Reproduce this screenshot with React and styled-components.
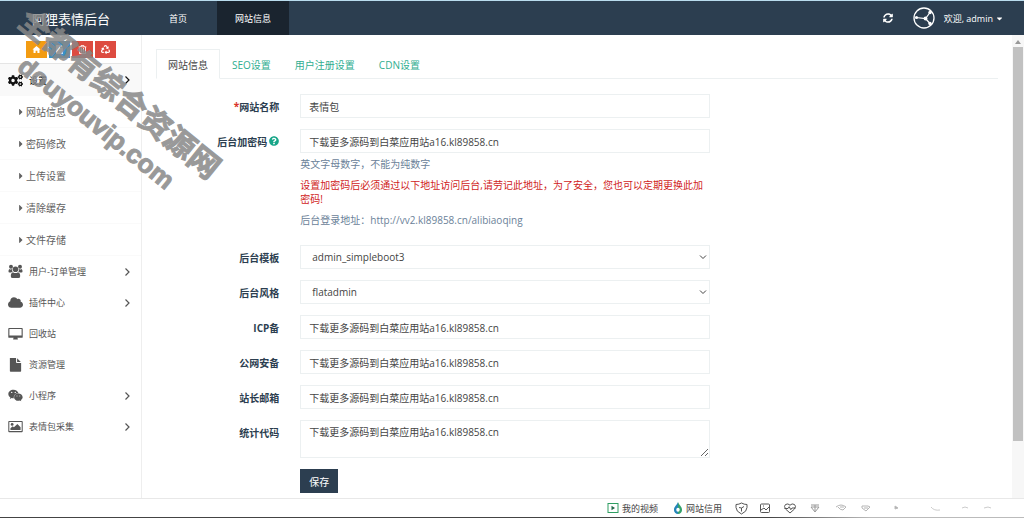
import React, { useState } from "react";
import styled, { createGlobalStyle } from "styled-components";
import {
  FaSyncAlt,
  FaCaretDown,
  FaCaretRight,
  FaCogs,
  FaCloud,
  FaFile,
  FaWeixin,
  FaQuestionCircle,
  FaRecycle,
  FaRegTrashAlt,
} from "react-icons/fa";

function UsersIcon(props) {
  return (
    <svg viewBox="0 0 16 16" fill="currentColor" aria-hidden="true" {...props}>
      <circle cx="3.2" cy="3" r="2.1" />
      <circle cx="12.8" cy="3" r="2.1" />
      <circle cx="8" cy="5.600" r="3" />
      <path d="M1.500 5.200Q3.200 6.300 4.300 5.300 4.100 7 5 8.200 4 8.300 3.400 9H1.600Q.5 9 .5 7.700.5 6 1.500 5.200zM14.500 5.200Q12.800 6.300 11.700 5.300 11.900 7 11 8.200 12 8.300 12.600 9h1.800Q15.500 9 15.500 7.700 15.500 6 14.500 5.200z" />
      <path d="M5.300 8.800Q8 10.600 10.700 8.800 13 9.200 13 13q0 2-2 2H5q-2 0-2-2 0-3.800 2.300-4.200z" />
    </svg>
  );
}

function DesktopIcon(props) {
  return (
    <svg viewBox="0 0 16 16" fill="currentColor" aria-hidden="true" {...props}>
      <path
        fillRule="evenodd"
        d="M1.200 2h13.600q.9 0 .9.900v8.800q0 .9-.9.900H10l.5 1.200v.7h-5v-.7l.5-1.200H1.200q-.9 0-.9-.9V2.900q0-.9.900-.9zM1.500 3.200v7h13v-7z"
      />
    </svg>
  );
}

function FileIcon(props) {
  return (
    <svg viewBox="0 0 16 16" fill="currentColor" aria-hidden="true" {...props}>
      <path d="M2 1h6.600v4.600q0 .8.800.8H14V15q0 .8-.8.800H2.800Q2 15.800 2 15zM9.700 1.200l4 4h-4z" />
    </svg>
  );
}

function ImageIcon(props) {
  return (
    <svg viewBox="0 0 16 16" fill="currentColor" aria-hidden="true" {...props}>
      <path
        fillRule="evenodd"
        d="M1.200 2h13.600q.9 0 .9.900v10.200q0 .9-.9.900H1.200q-.9 0-.9-.9V2.900q0-.9.900-.9zM1.400 3.100v9.800h13.200V3.100z"
      />
      <circle cx="4.400" cy="5.800" r="1.500" />
      <path d="M2.600 11.800V9.900L5 7.600l1.300 1.300L10 5.200l3.400 3.500v3.100z" />
    </svg>
  );
}

function ArrowIcon(props) {
  return (
    <svg viewBox="0 0 10 12" fill="none" stroke="currentColor" aria-hidden="true" {...props}>
      <path d="M3.500 2.500 7 6 3.500 9.500" strokeWidth="1.200" />
    </svg>
  );
}

function HomeIcon(props) {
  return (
    <svg width="9" height="9" viewBox="0 0 10 10" fill="currentColor" aria-hidden="true" {...props}>
      <path d="M5 1 9.500 5H8.300v4H6V6.500H4V9H1.700V5H.5z" />
    </svg>
  );
}

const subMenu = ["网站信息", "密码修改", "上传设置", "清除缓存", "文件存储"];

const mainMenu = [
  { label: "用户-订单管理", icon: UsersIcon, more: true },
  { label: "插件中心", icon: FaCloud, more: true },
  { label: "回收站", icon: DesktopIcon },
  { label: "资源管理", icon: FileIcon },
  { label: "小程序", icon: FaWeixin, more: true },
  { label: "表情包采集", icon: ImageIcon, more: true },
];

const tools = [
  { label: "首页", color: "#f39c12", icon: HomeIcon },
  { label: "文章", color: "#3a8fc9", icon: FaFile },
  { label: "删除", color: "#dd4b40", icon: FaRegTrashAlt },
  { label: "清除缓存", color: "#dd4b40", icon: FaRecycle },
];

const tabs = ["网站信息", "SEO设置", "用户注册设置", "CDN设置"];

const code = "下载更多源码到白菜应用站a16.kl89858.cn";

const extraFields = [
  { id: "icp", label: "ICP备" },
  { id: "police", label: "公网安备" },
  { id: "email", label: "站长邮箱" },
];

function Avatar() {
  return (
    <svg width="22" height="22" viewBox="0 0 22 22" fill="none" stroke="#fff" aria-hidden="true">
      <circle cx="11" cy="11" r="10" strokeWidth="1.300" />
      <path d="M3 10.500 12.500 11.500 17 5.500M12.500 11.500l4.500 5" strokeWidth="1.200" />
      <g fill="#fff" stroke="none">
        <circle cx="3.500" cy="10.500" r="1.600" />
        <circle cx="12.500" cy="11.500" r="1.900" />
        <circle cx="17" cy="5.500" r="1.700" />
        <circle cx="17" cy="16.500" r="1.700" />
      </g>
    </svg>
  );
}

function StatusBar() {
  return (
    <Status>
      <StatusItem>
        <svg width="12" height="12" viewBox="0 0 12 12" aria-hidden="true">
          <rect x="1" y="1.500" width="10" height="9" fill="none" stroke="#2f9e62" />
          <path d="M4.500 3.800v4.400L8 6z" fill="#24684a" />
        </svg>
        我的视频
      </StatusItem>
      <StatusItem>
        <svg width="10" height="12" viewBox="0 0 10 12" aria-hidden="true">
          <path d="M5 0C6 3 9 4.600 9 7.700A4 4 0 0 1 5 12Z" fill="#34a26b" />
          <path d="M5 0C4 3 1 4.600 1 7.700A4 4 0 0 0 5 12Z" fill="#2585b9" />
          <ellipse cx="5" cy="7.800" rx="1.700" ry="2" fill="#fff" />
        </svg>
        网站信用
      </StatusItem>
      <StatusIcons viewBox="0 0 280 14" aria-hidden="true">
        <g stroke="#555">
          <path d="M2 3.500Q5 3.500 7.500 2q2.500 1.500 5.500 1.500v3q0 4-5.500 6.500Q2 10.500 2 6.500zM5 6.500 7.500 7 10 5.500M7.500 7v3.500" />
          <rect x="26.500" y="3" width="9" height="8.500" rx="1" />
          <path d="M27 9l3-2 2 2 3-3M29 5h1" />
          <path d="M56 12 51.500 8q-2-3 0-4.500Q54 2 56 4.200 58 2 60.500 3.500q2 1.500 0 4.500zM50.500 7.500H54l1.200-1.800 1.600 3L58 7h3.500" />
        </g>
        <g stroke="#999">
          <path d="M77 4h8M77 6h8l-4 5-4-5M81 4v6" />
          <path d="M102 6q5-4 10 0l-3 3q-3 0-5-3M106 6h4" stroke="#b5b5b5" />
          <path d="M128 5h6l2 1-4 4-4-3zM130 7h4" stroke="#b5b5b5" />
        </g>
        <path d="M161 5l3 2-3 1z" fill="#aaa" stroke="#bbb" />
        <path d="M197 6q3 4 9 3" stroke="#ccc" />
        <path d="M228 7q3-2 6 0M250 7l4-1 3 1" stroke="#ccc" />
      </StatusIcons>
    </Status>
  );
}

function SelectField({ id, value }) {
  return (
    <SelectWrap>
      <Select id={id}>
        <option>{value}</option>
      </Select>
      <svg viewBox="0 0 8 8" fill="none" stroke="#444" aria-hidden="true">
        <path d="M1 2.500 4 5.500 7 2.500" />
      </svg>
    </SelectWrap>
  );
}

export default function App() {
  const [activeTab, setActiveTab] = useState(tabs[0]);

  return (
    <>
      <GlobalStyle />
      <Page>
        <Header>
          <Brand href="#">阿狸表情后台</Brand>
          <Nav>
            <NavLink href="#">首页</NavLink>
            <NavLink href="#" $active>
              网站信息
            </NavLink>
          </Nav>
          <UserArea>
            <RefreshButton aria-label="刷新">
              <FaSyncAlt />
            </RefreshButton>
            <UserButton>
              <Avatar />
              欢迎, admin
              <FaCaretDown />
            </UserButton>
          </UserArea>
        </Header>

        <Body>
          <Sidebar>
            <Tools>
              {tools.map(({ label, color, icon: Icon }) => (
                <ToolButton key={label} $color={color} aria-label={label}>
                  <Icon />
                </ToolButton>
              ))}
            </Tools>
            <MenuLink href="#" $open>
              <FaCogs className="icon" />
              <span>设置</span>
              <ArrowIcon className="arrow" />
            </MenuLink>
            {subMenu.map((label) => (
              <SubLink href="#" key={label}>
                <FaCaretRight />
                {label}
              </SubLink>
            ))}
            {mainMenu.map(({ label, icon: Icon, more }) => (
              <MenuLink href="#" key={label}>
                <Icon className="icon" />
                <span>{label}</span>
                {more && <ArrowIcon className="arrow" />}
              </MenuLink>
            ))}
            <Watermark aria-hidden="true">
              <p>全都有综合资源网</p>
              <p className="site">douyouvip.com</p>
            </Watermark>
          </Sidebar>

          <Main>
            <Tabs>
              {tabs.map((tab) => (
                <Tab key={tab} $active={tab === activeTab} onClick={() => setActiveTab(tab)}>
                  {tab}
                </Tab>
              ))}
            </Tabs>
            <Form onSubmit={(e) => e.preventDefault()}>
              <Row>
                <Label htmlFor="name">
                  <Required>*</Required>网站名称
                </Label>
                <Input id="name" defaultValue="表情包" />
              </Row>
              <Row>
                <Label htmlFor="password">
                  后台加密码 <FaQuestionCircle />
                </Label>
                <div>
                  <Input id="password" defaultValue={code} />
                  <Help>英文字母数字，不能为纯数字</Help>
                  <Help $warn>
                    设置加密码后必须通过以下地址访问后台,请劳记此地址，为了安全，您也可以定期更换此加密码!
                  </Help>
                  <Help>后台登录地址：http://vv2.kl89858.cn/alibiaoqing</Help>
                </div>
              </Row>
              <Row>
                <Label htmlFor="template">后台模板</Label>
                <SelectField id="template" value="admin_simpleboot3" />
              </Row>
              <Row>
                <Label htmlFor="theme">后台风格</Label>
                <SelectField id="theme" value="flatadmin" />
              </Row>
              {extraFields.map(({ id, label }) => (
                <Row key={id}>
                  <Label htmlFor={id}>{label}</Label>
                  <Input id={id} defaultValue={code} />
                </Row>
              ))}
              <Row>
                <Label htmlFor="stats">统计代码</Label>
                <TextArea id="stats" defaultValue={code} />
              </Row>
              <Row>
                <span />
                <SaveButton type="submit">保存</SaveButton>
              </Row>
            </Form>
          </Main>
          <Scrollbar aria-hidden="true">
            <span />
            <div />
          </Scrollbar>
        </Body>
        <StatusBar />
        <BottomEdge />
      </Page>
    </>
  );
}

const GlobalStyle = createGlobalStyle`
  * {
    box-sizing: border-box;
  }
  body {
    margin: 0;
    overflow: hidden;
  }
  body, button, input, select, textarea {
    font-family: "Open Sans", "Noto Sans CJK SC", sans-serif;
    font-size: 10px;
  }
  a {
    text-decoration: none;
  }
  p {
    margin: 0;
  }
  button {
    border: 0;
    padding: 0;
    cursor: pointer;
  }
`;

const Page = styled.div`
  display: flex;
  flex-direction: column;
  height: 100vh;
  border-top: 1px solid #b9dcee;
  background: #fff;
  color: #2c3e50;
`;

const Header = styled.header`
  display: flex;
  flex: 0 0 34px;
  background: #2c3e50;
`;

const Brand = styled.a`
  display: flex;
  align-items: center;
  justify-content: center;
  width: 142px;
  color: #fff;
  font-size: 13px;
`;

const Nav = styled.nav`
  display: flex;
`;

const NavLink = styled.a`
  display: flex;
  align-items: center;
  justify-content: center;
  width: 72px;
  margin-right: 3px;
  color: #fff;
  font-size: 9px;
  background: ${({ $active }) => ($active ? "#1a242f" : "transparent")};
`;

const UserArea = styled.div`
  display: flex;
  align-items: center;
  gap: 20px;
  margin-left: auto;
  padding-right: 20px;
`;

const RefreshButton = styled.button`
  display: flex;
  background: none;
  color: #fff;
`;

const UserButton = styled.button`
  display: flex;
  align-items: center;
  background: none;
  color: #fff;
  font-size: 9px;
  svg:first-child {
    margin-right: 9px;
  }
  svg:last-child {
    margin-left: 2px;
  }
`;

const Body = styled.div`
  display: flex;
  flex: 1;
  min-height: 0;
`;

const Sidebar = styled.aside`
  position: relative;
  flex: 0 0 142px;
  border-right: 1px solid #eee;
`;

const Tools = styled.div`
  display: flex;
  gap: 2px;
  height: 29px;
  padding: 6px 0 5px 26px;
  border-bottom: 1px solid #e5e5e5;
`;

const ToolButton = styled.button`
  display: flex;
  align-items: center;
  justify-content: center;
  width: 21px;
  background: ${({ $color }) => $color};
  color: #fff;
  font-size: 9px;
`;

const MenuLink = styled.a`
  display: flex;
  align-items: center;
  height: ${({ $open }) => ($open ? "32px" : "31px")};
  padding: 0 9px 0 8px;
  color: ${({ $open }) => ($open ? "#111" : "#555")};
  background: ${({ $open }) => ($open ? "#f9f9f9" : "transparent")};
  font-size: 9px;
  .icon {
    width: 15px;
    height: 15px;
    margin-right: 6px;
  }
  .arrow {
    width: 10px;
    height: 12px;
    margin-left: auto;
  }
`;

const SubLink = styled.a`
  display: flex;
  align-items: center;
  height: 32px;
  padding-left: 16px;
  border-bottom: 1px solid #fafafa;
  color: #616161;
`;

const Watermark = styled.div`
  position: absolute;
  top: -32px;
  left: 34px;
  z-index: 2;
  transform: rotate(39deg);
  transform-origin: 0 0;
  white-space: nowrap;
  pointer-events: none;
  color: #888;
  -webkit-text-stroke: 1px #888;
  opacity: 0.85;
  font-family: "Liberation Sans", "Noto Sans CJK SC", sans-serif;
  font-weight: bold;
  font-size: 31px;
  line-height: 36px;
  .site {
    padding-left: 28px;
    font-size: 26px;
  }
`;

const Main = styled.main`
  flex: 1;
  min-width: 0;
  padding: 14px 14px 0;
`;

const Tabs = styled.div`
  display: flex;
  height: 30px;
  border-bottom: 1px solid #ecf0f1;
`;

const Tab = styled.button`
  height: 30px;
  padding: 0 11px;
  border: 1px solid ${({ $active }) => ($active ? "#ecf0f1" : "transparent")};
  border-bottom-color: ${({ $active }) => ($active ? "#fff" : "transparent")};
  background: ${({ $active }) => ($active ? "#fff" : "transparent")};
  color: ${({ $active }) => ($active ? "#444" : "#2fae90")};
`;

const Form = styled.form`
  display: grid;
  gap: 11px;
  padding-top: 15px;
`;

const Row = styled.div`
  display: grid;
  grid-template-columns: 15% minmax(0, 410px);
  column-gap: 18px;
  align-items: start;
`;

const Label = styled.label`
  display: flex;
  align-items: center;
  justify-content: flex-end;
  height: 24px;
  padding-right: 3px;
  font-weight: bold;
  svg {
    margin-left: 2px;
    color: #18a689;
  }
`;

const Required = styled.span`
  color: #d9332a;
`;

const Input = styled.input`
  display: block;
  width: 100%;
  height: 24px;
  padding: 0 8px;
  border: 1px solid #ecf0f1;
  background: #fff;
  color: #444;
`;

const SelectWrap = styled.div`
  position: relative;
  svg {
    position: absolute;
    top: 8px;
    right: 3px;
    width: 8px;
    height: 8px;
    pointer-events: none;
  }
`;

const Select = styled.select`
  display: block;
  width: 100%;
  height: 24px;
  padding: 0 11px;
  border: 1px solid #ecf0f1;
  border-radius: 0;
  appearance: none;
  background: #fff;
  color: #444;
`;

const TextArea = styled.textarea`
  display: block;
  width: 100%;
  height: 38px;
  padding: 4px 8px;
  border: 1px solid #ecf0f1;
  color: #444;
  line-height: 14px;
`;

const Help = styled.p`
  margin: 4px 0 7px;
  line-height: 14px;
  color: ${({ $warn }) => ($warn ? "#d01c1c" : "#6b8299")};
`;

const SaveButton = styled.button`
  width: 38px;
  height: 24px;
  background: #2c3e50;
  color: #fff;
`;

const Scrollbar = styled.div`
  display: flex;
  flex-direction: column;
  align-items: center;
  width: 12px;
  background: #f7f7f7;
  span {
    margin: 5px 0 3px;
    border: 3px solid transparent;
    border-top: 0;
    border-bottom: 4px solid #999;
  }
  div {
    width: 10px;
    height: 85%;
    background: #c1c1c1;
  }
`;

const Status = styled.footer`
  display: flex;
  flex: 0 0 19px;
  align-items: center;
  justify-content: flex-end;
  gap: 15px;
  border-top: 1px solid #e8e8e8;
  color: #444;
`;

const StatusItem = styled.span`
  display: flex;
  align-items: center;
  gap: 3px;
  font-size: 9px;
`;

const StatusIcons = styled.svg`
  width: 280px;
  height: 14px;
  margin: 0 10px 0 -3px;
  fill: none;
`;

const BottomEdge = styled.div`
  flex: 0 0 1px;
  background: linear-gradient(to right, #444 75%, #bbb 85%);
`;
